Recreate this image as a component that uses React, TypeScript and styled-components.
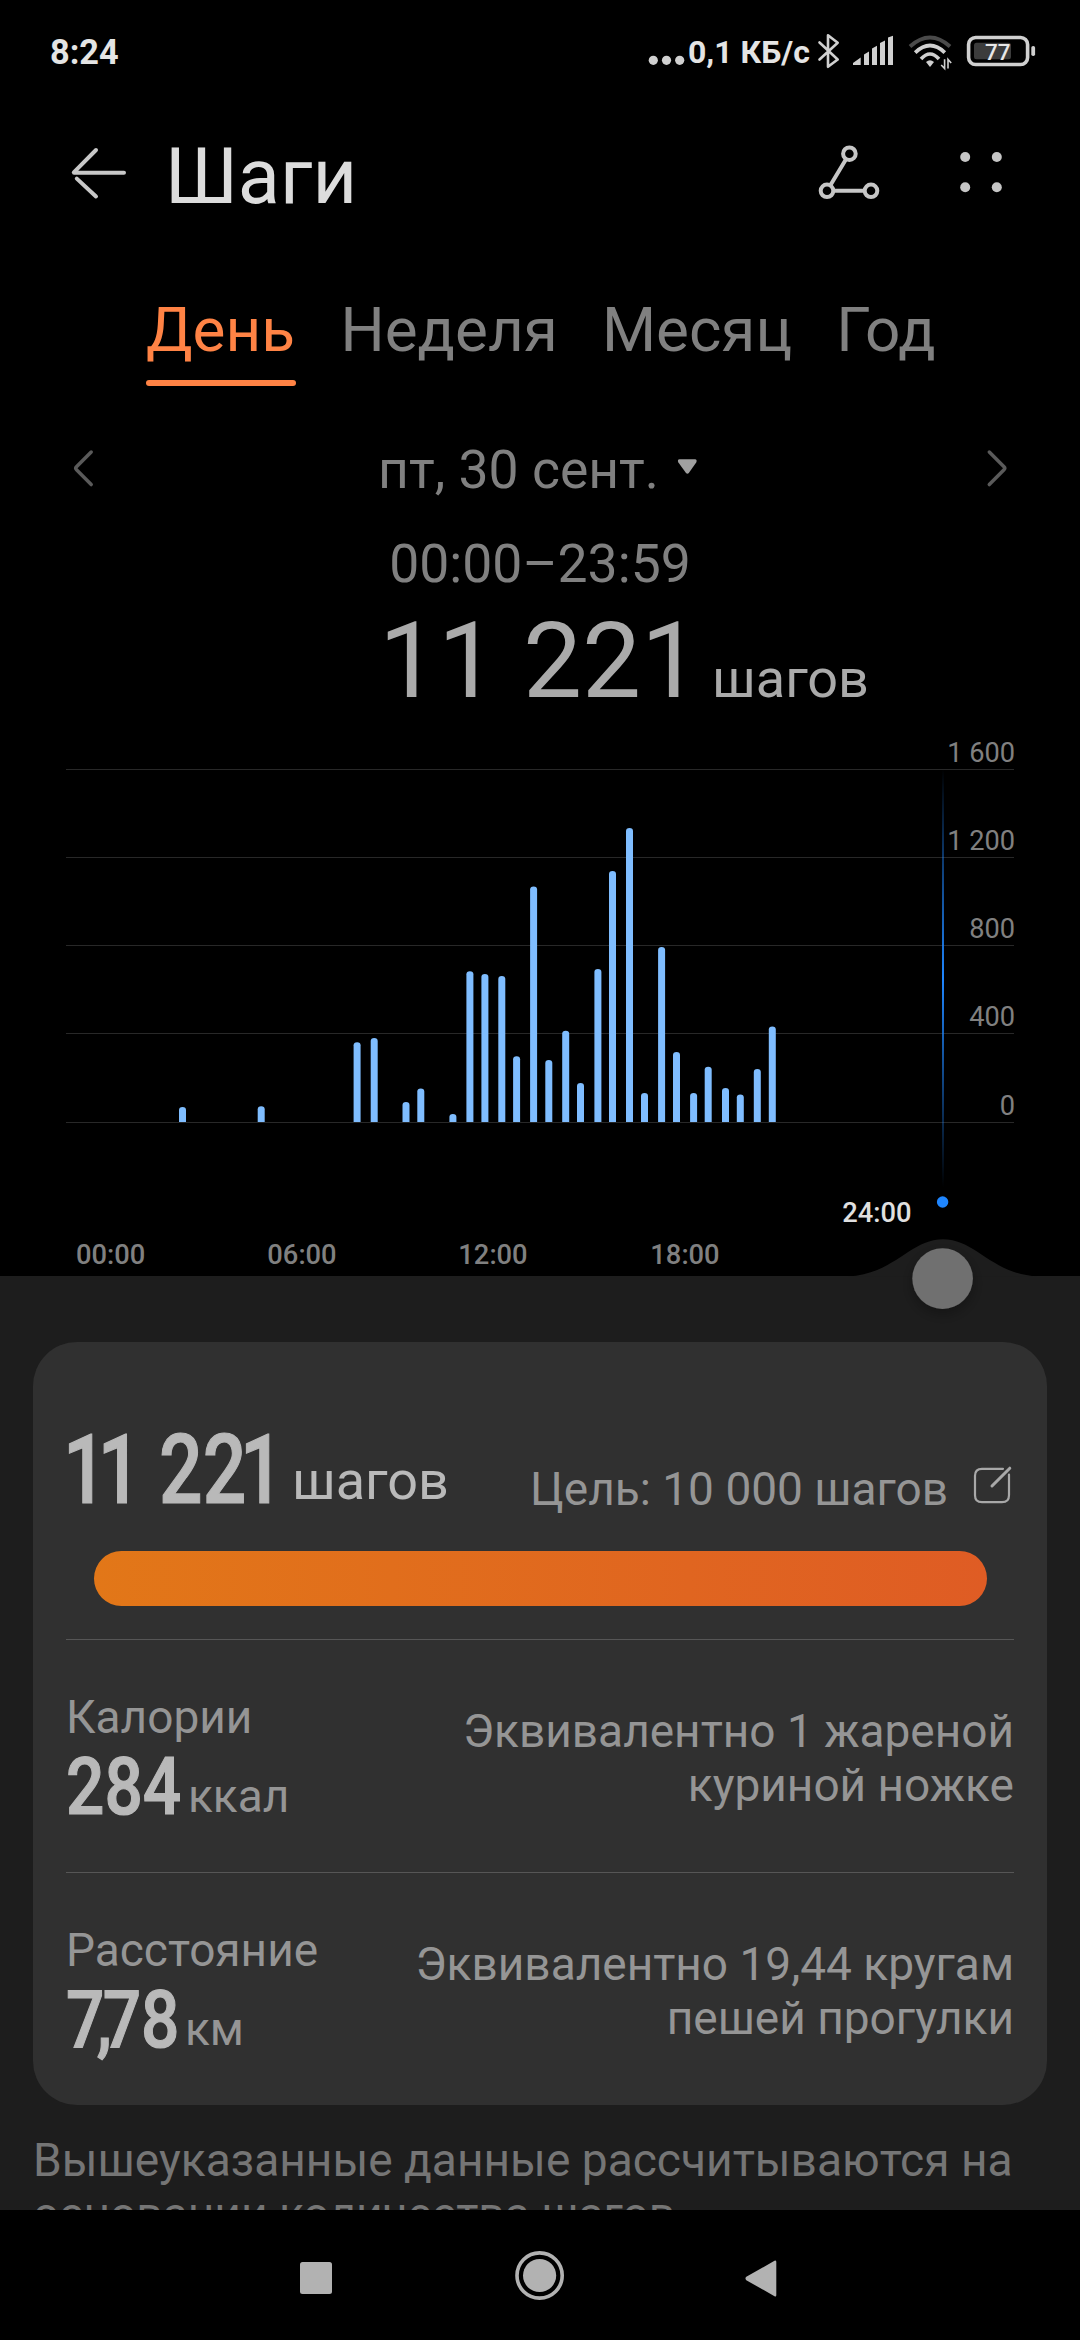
import React from "react";
import styled, { createGlobalStyle } from "styled-components";

const GlobalStyle = createGlobalStyle`
  * { box-sizing: border-box; }
  html, body { margin: 0; padding: 0; background: #000; }
  body { font-family: Roboto, "Noto Sans", sans-serif; }
`;

const Screen = styled.div`
  width: 1080px;
  height: 2340px;
  display: flex;
  flex-direction: column;
  background: #000;
  overflow: hidden;
`;

const StatusBar = styled.header`
  height: 104px;
  flex: none;
  display: flex;
  align-items: center;
  justify-content: space-between;
  padding: 0 40px 0 50px;
`;

const Clock = styled.span`
  font-size: 34.3px;
  font-weight: 700;
  line-height: 104px;
  color: #e4e4e4;
`;

const StatusGroup = styled.div`
  display: flex;
  align-items: center;
`;

const NetSpeed = styled.span`
  width: 126px;
  font-size: 32px;
  font-weight: 700;
  line-height: 104px;
  white-space: nowrap;
  color: #e4e4e4;
`;

const Icon = styled.svg<{ $gap?: number }>`
  display: block;
  flex: none;
  margin-left: ${(p) => p.$gap ?? 0}px;
`;

const Battery = styled.div`
  display: grid;
  flex: none;
  margin-left: 5px;
  > * { grid-area: 1 / 1; }
`;

const BatteryLevel = styled.span`
  padding-left: 23px;
  font-size: 22.5px;
  font-weight: 500;
  line-height: 41px;
  color: #e8e8e8;
`;

const TitleBar = styled.div`
  height: 136px;
  flex: none;
  display: flex;
  align-items: center;
  padding: 0 66px;
`;

const Title = styled.h1`
  margin: 0;
  padding: 9px 0 0 35px;
  flex: 1;
  font-size: 77.4px;
  font-weight: 400;
  line-height: 100px;
  color: #dcdcdc;
`;

const Tabs = styled.nav`
  height: 160px;
  flex: none;
  display: flex;
  gap: 44.1px;
  padding: 50px 0 0 146px;
`;

const Tab = styled.div<{ $active?: boolean }>`
  font-size: 62px;
  line-height: 80px;
  padding-right: ${(p) => (p.$active ? 1.5 : 0)}px;
  color: ${(p) => (p.$active ? "#ff8345" : "#808080")};
  &::after {
    content: "";
    display: ${(p) => (p.$active ? "block" : "none")};
    height: 6px;
    margin: 10px -1.5px 0 0;
    border-radius: 3px;
    background: #ff8345;
  }
`;

const DateRow = styled.div`
  height: 140px;
  flex: none;
  display: flex;
  align-items: center;
  justify-content: space-between;
  padding: 0 68px;
`;

const DatePicker = styled.div`
  display: flex;
  align-items: center;
  gap: 17px;
  padding-right: 4px;
  font-size: 53.5px;
  line-height: 64px;
  color: #808080;
`;

const TimeRange = styled.div`
  height: 48px;
  flex: none;
  text-align: center;
  font-size: 53.5px;
  line-height: 48px;
  color: #808080;
`;

const TotalRow = styled.div`
  height: 132px;
  flex: none;
  display: flex;
  align-items: baseline;
  gap: 12px;
  padding-left: 379px;
  color: #aaa;
  line-height: 147px;
`;

const TotalValue = styled.span`
  font-size: 105px;
`;

const TotalUnit = styled.span`
  font-size: 54px;
`;

const Chart = styled.svg`
  display: block;
  flex: none;
  position: relative;
  z-index: 1;
  overflow: visible;
  font-family: Roboto, "Noto Sans", sans-serif;
`;

const Sheet = styled.main`
  height: 934px;
  flex: none;
  padding: 66px 33px 0;
  background: #1d1d1d;
  overflow: hidden;
`;

const Card = styled.section`
  height: 763px;
  padding: 0 33px;
  border-radius: 44px;
  background: #303030;
`;

const GoalRow = styled.div`
  height: 209px;
  display: flex;
  align-items: flex-start;
`;

const Figure = styled.span<{ $size: number; $stretch: number; $width: number; $top?: number; $left?: number }>`
  flex: none;
  width: ${(p) => p.$width}px;
  margin-top: ${(p) => p.$top ?? 0}px;
  margin-left: ${(p) => p.$left ?? 0}px;
  font-size: ${(p) => p.$size}px;
  font-weight: 500;
  -webkit-text-stroke: 1.2px #b9b9b9;
  line-height: ${(p) => (p.$size > 90 ? 100 : 80)}px;
  white-space: nowrap;
  color: #b9b9b9;
  transform: scaleX(${(p) => p.$stretch});
  transform-origin: 0 50%;
`;

const Kern = styled.span<{ $by: number }>`
  letter-spacing: ${(p) => p.$by}px;
`;

const StepsUnit = styled.span`
  margin-top: 109px;
  font-size: 54px;
  line-height: 60px;
  color: #b9b9b9;
`;

const Goal = styled.div`
  display: flex;
  align-items: flex-start;
  margin: 120px 0 0 auto;
  font-size: 46px;
  line-height: 54px;
  color: #959595;
`;

const Progress = styled.div`
  height: 55px;
  margin: 0 27.5px 33px;
  border-radius: 28px;
  background: linear-gradient(90deg, #e27718, #df5c24);
`;

const Metric = styled.div`
  height: 233px;
  display: flex;
  justify-content: space-between;
  border-top: 1px solid #565656;
`;

const MetricMain = styled.div`
  padding-top: 50px;
`;

const MetricLabel = styled.div`
  font-size: 46px;
  line-height: 54px;
  color: #959595;
`;

const MetricValue = styled.div`
  display: flex;
  align-items: flex-start;
  padding-top: 3px;
`;

const MetricUnit = styled.span`
  padding-top: 22px;
  font-size: 46px;
  line-height: 54px;
  color: #959595;
`;

const Equivalent = styled.p`
  margin: 0;
  padding-top: 65px;
  font-size: 46px;
  line-height: 53.8px;
  text-align: right;
  white-space: nowrap;
  color: #959595;
`;

const Note = styled.p`
  margin: 29px -20px 0 0;
  font-size: 46.1px;
  line-height: 53.8px;
  color: #757575;
`;

const SystemNav = styled.footer`
  height: 130px;
  flex: none;
  display: flex;
  align-items: flex-start;
  padding: 38px 0 0 296px;
`;

const BASE = 1122;

/* [centre x, top y] of every half-hour bar */
const bars: [number, number][] = [
  [182.5, 1107], [261.2, 1106.2], [357.1, 1042.2], [374.2, 1038.1], [406, 1102.1],
  [420.8, 1088.4], [452.9, 1113.9], [469.9, 971.2], [484.9, 974.1], [501.8, 976],
  [516.6, 1056.2], [533.6, 886.5], [548.8, 1060], [565.7, 1030.8], [580.5, 1083],
  [597.9, 969.1], [612.5, 871], [629.5, 828], [644.5, 1092.9], [661.6, 947],
  [676.5, 1052.1], [693.6, 1092.9], [708.2, 1066.8], [725.5, 1088.1], [740.3, 1094.5],
  [757.3, 1069.1], [772.3, 1026.4],
];

const grid: [number, string][] = [
  [769, "1 600"], [857, "1 200"], [945, "800"], [1033, "400"], [1122, "0"],
];

const hours: [number, string][] = [
  [110.7, "00:00"], [302, "06:00"], [493, "12:00"], [685, "18:00"],
];

function barPath(cx: number, top: number) {
  const l = cx - 3.5;
  const r = cx + 3.5;
  return `M${l} ${BASE}V${top + 3}Q${l} ${top} ${cx} ${top}Q${r} ${top} ${r} ${top + 3}V${BASE}Z`;
}

function StepsChart() {
  return (
    <Chart width="1080" height="556" viewBox="0 720 1080 556">
      <defs>
        <linearGradient id="cursor" x1="0" y1="769" x2="0" y2="1187" gradientUnits="userSpaceOnUse">
          <stop offset="0" stopColor="#1f86ff" stopOpacity="0" />
          <stop offset="0.5" stopColor="#1f86ff" />
          <stop offset="1" stopColor="#1f86ff" stopOpacity="0" />
        </linearGradient>
        <filter id="knobShadow" x="-50%" y="-50%" width="200%" height="200%">
          <feDropShadow dx="0" dy="5" stdDeviation="7" floodColor="#000" floodOpacity="0.3" />
        </filter>
      </defs>
      {grid.map(([y, label]) => (
        <g key={label}>
          <rect x="66" y={y} width="948" height="1" fill="#282828" />
          <text x="1015" y={y - 7.4} fontSize="27.2" textAnchor="end" fill="#808080">{label}</text>
        </g>
      ))}
      {bars.map(([cx, top]) => (
        <path key={cx} d={barPath(cx, top)} fill="#7fbdff" />
      ))}
      {hours.map(([x, label]) => (
        <text key={label} x={x} y="1263.8" fontSize="27.3" fontWeight="500" textAnchor="middle" fill="#808080">{label}</text>
      ))}
      <text x="876.8" y="1222.2" fontSize="27.3" fontWeight="500" textAnchor="middle" fill="#e0e0e0">24:00</text>
      <rect x="942" y="769" width="2" height="418" fill="url(#cursor)" />
      <circle cx="942.6" cy="1202" r="5.7" fill="#1f86ff" />
      <path d="M848 1276.5C895 1274 910 1239.3 943 1239.3S991 1274 1038 1276.5Z" fill="#1d1d1d" />
      <circle cx="942.6" cy="1278.6" r="30.3" fill="#6f6f6f" filter="url(#knobShadow)" />
    </Chart>
  );
}

export default function App() {
  return (
    <>
      <GlobalStyle />
      <Screen>
        <StatusBar>
          <Clock>8:24</Clock>
          <StatusGroup>
            <Icon width="40" height="40" viewBox="648 32 40 40" fill="#d0d0d0">
              <circle cx="653.3" cy="60.3" r="4.6" />
              <circle cx="666.5" cy="60.3" r="4.6" />
              <circle cx="679.7" cy="60.3" r="4.6" />
            </Icon>
            <NetSpeed>0,1 КБ/с</NetSpeed>
            <Icon width="30" height="40" viewBox="814 32 30 40" fill="none" stroke="#d0d0d0" strokeWidth="2.6" strokeLinejoin="round" strokeLinecap="round">
              <path d="M819.5 42.5L837.7 59.5L828 66.8V35.2L837.7 42.8L819.5 59.5" />
            </Icon>
            <Icon $gap={4} width="50" height="40" viewBox="848 32 50 40" fill="#d0d0d0">
              <path d="M853 65V63L860.7 57.5V65ZM864 65V54.5L869 51.5V65ZM872 65V48.5L877 45.8V65ZM880 65V43L885 40.5V65ZM888 65V37.5L893 35.8V65Z" />
            </Icon>
            <Icon $gap={5} width="54" height="40" viewBox="903 32 54 40" fill="none">
              <path d="M910 46.5Q930 28.5 950 46.5" stroke="#4a4a4a" strokeWidth="4" />
              <path d="M915.2 52.6Q930 38.5 944.8 52.6" stroke="#d0d0d0" strokeWidth="3.8" />
              <path d="M921 59Q930 49 939 59" stroke="#d0d0d0" strokeWidth="3.6" />
              <path d="M926 62Q930 58.5 934 62L930 67Z" fill="#d0d0d0" />
              <path d="M944.6 59.2V68.6L941.2 65M948 68.6V59.4L951.2 63" stroke="#d0d0d0" strokeWidth="1.6" />
            </Icon>
            <Battery>
              <Icon width="78" height="40" viewBox="962 32 78 40">
                <rect x="968.6" y="37.5" width="59" height="27" rx="7" fill="none" stroke="#d0d0d0" strokeWidth="3.6" />
                <rect x="974" y="42.7" width="37" height="16.5" rx="2.5" fill="#3c3c3c" />
                <rect x="1031.3" y="46" width="3.8" height="10" rx="1.8" fill="#d0d0d0" />
              </Icon>
              <BatteryLevel>77</BatteryLevel>
            </Battery>
          </StatusGroup>
        </StatusBar>

        <TitleBar>
          <Icon width="64" height="60" viewBox="66 142 64 60" fill="none" stroke="#c8c8c8" strokeWidth="4" strokeLinecap="round" strokeLinejoin="round">
            <path d="M96 150L73.8 172.3M74 172.8H124M76.8 178.6L96 196.5" />
          </Icon>
          <Title>Шаги</Title>
          <Icon width="68" height="60" viewBox="814 142 68 60" fill="none" stroke="#c6c6c6" strokeWidth="4">
            <circle cx="849.4" cy="153.7" r="6.3" />
            <circle cx="827" cy="190.8" r="6.3" />
            <circle cx="871" cy="190.8" r="6.3" />
            <path d="M846 159.3L830.4 185.2M833.5 190.8H864.5" />
          </Icon>
          <Icon $gap={70} width="62" height="60" viewBox="952 142 62 60" fill="#c6c6c6">
            <circle cx="965.2" cy="157" r="5" />
            <circle cx="996.8" cy="157" r="5" />
            <circle cx="965.2" cy="187.3" r="5" />
            <circle cx="996.8" cy="187.3" r="5" />
          </Icon>
        </TitleBar>

        <Tabs>
          <Tab $active>День</Tab>
          <Tab>Неделя</Tab>
          <Tab>Месяц</Tab>
          <Tab>Год</Tab>
        </Tabs>

        <DateRow>
          <Icon width="30" height="44" viewBox="68 448 30 44" fill="none" stroke="#5a5a5a" strokeWidth="3.5" strokeLinecap="round" strokeLinejoin="round">
            <path d="M91.2 452L76.5 466.8Q75 468.3 76.5 469.8L91.2 484.6" />
          </Icon>
          <DatePicker>
            <span>пт, 30 сент.</span>
            <Icon width="22" height="44" viewBox="675 448 22 44" fill="#a0a0a0">
              <path d="M678.5 459.3H694Q696.5 459.5 695.2 462.5L687.8 473Q686.4 474.5 685 473L677.4 462.5Q676 459.5 678.5 459.3Z" />
            </Icon>
          </DatePicker>
          <Icon width="30" height="44" viewBox="982 448 30 44" fill="none" stroke="#5a5a5a" strokeWidth="3.5" strokeLinecap="round" strokeLinejoin="round">
            <path d="M989.3 452L1004 466.8Q1005.5 468.3 1004 469.8L989.3 484.6" />
          </Icon>
        </DateRow>
        <TimeRange>00:00–23:59</TimeRange>
        <TotalRow>
          <TotalValue>11 221</TotalValue>
          <TotalUnit>шагов</TotalUnit>
        </TotalRow>

        <StepsChart />

        <Sheet>
          <Card>
            <GoalRow>
              <Figure $size={96} $stretch={0.8} $width={229} $top={77.5} $left={-3}>
                <Kern $by={-11}>1</Kern><Kern $by={-2}>1</Kern> 2<Kern $by={-8}>2</Kern>1
              </Figure>
              <StepsUnit>шагов</StepsUnit>
              <Goal>
                <span>Цель: 10 000 шагов</span>
                <Icon $gap={22} width="44" height="46" viewBox="970 1463.4 44 46" fill="none" stroke="#a8a8a8" strokeWidth="2.2" strokeLinecap="round">
                  <path d="M1003 1470.2H982Q975 1470.2 975 1477.2V1496.6Q975 1503.6 982 1503.6H1002Q1009 1503.6 1009 1496.6V1476" />
                  <path d="M992 1487.4L1009.8 1469.6" strokeWidth="3" />
                </Icon>
              </Goal>
            </GoalRow>
            <Progress />
            <Metric>
              <MetricMain>
                <MetricLabel>Калории</MetricLabel>
                <MetricValue>
                  <Figure $size={80} $stretch={0.845} $width={122}>284</Figure>
                  <MetricUnit>ккал</MetricUnit>
                </MetricValue>
              </MetricMain>
              <Equivalent>Эквивалентно 1 жареной<br />куриной ножке</Equivalent>
            </Metric>
            <Metric>
              <MetricMain>
                <MetricLabel>Расстояние</MetricLabel>
                <MetricValue>
                  <Figure $size={80} $stretch={0.845} $width={119}>
                    <Kern $by={-9}>7</Kern><Kern $by={-11}>,</Kern>78
                  </Figure>
                  <MetricUnit>км</MetricUnit>
                </MetricValue>
              </MetricMain>
              <Equivalent>Эквивалентно 19,44 кругам<br />пешей прогулки</Equivalent>
            </Metric>
          </Card>
          <Note>Вышеуказанные данные рассчитываются на основании количества шагов.</Note>
        </Sheet>

        <SystemNav>
          <Icon width="40" height="56" viewBox="296 2248 40 56" fill="#b2b2b2">
            <rect x="300" y="2262" width="32" height="32" rx="2.5" />
          </Icon>
          <Icon $gap={174} width="60" height="56" viewBox="510 2248 60 56" fill="#b2b2b2">
            <circle cx="539.6" cy="2275.5" r="22.6" fill="none" stroke="#b2b2b2" strokeWidth="3.6" />
            <circle cx="539.6" cy="2275.5" r="16.6" />
          </Icon>
          <Icon $gap={170} width="40" height="56" viewBox="740 2248 40 56" fill="#b2b2b2">
            <path d="M774.5 2260.8Q776.3 2259.6 776.3 2262V2295Q776.3 2297.4 774.5 2296.2L746.3 2280.2Q744.6 2278.5 746.3 2276.8Z" />
          </Icon>
        </SystemNav>
      </Screen>
    </>
  );
}
